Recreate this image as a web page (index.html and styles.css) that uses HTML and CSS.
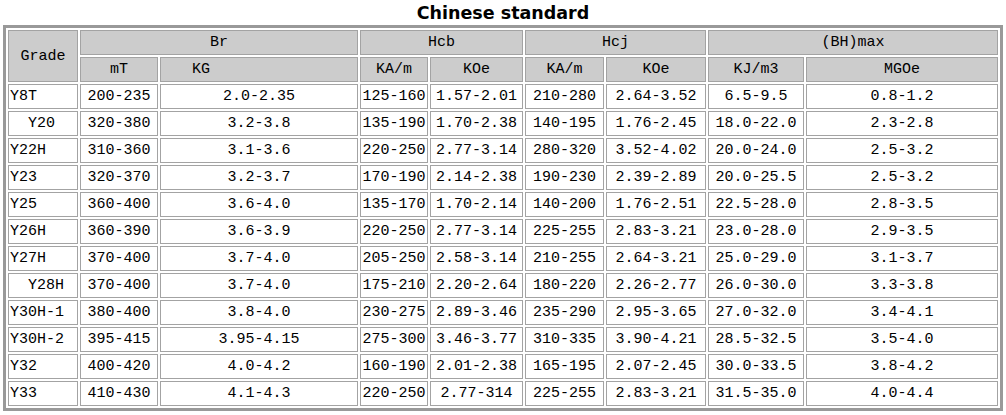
FILE: index.html
```html
<!DOCTYPE html>
<html>
<head>
<meta charset="utf-8">
<title>Chinese standard</title>
<link rel="stylesheet" href="styles.css">
</head>
<body>
<div class="page">
  <div class="title">Chinese standard</div>
  <table class="grid">
    <colgroup>
      <col class="c-grade"><col class="c-mt"><col class="c-kg"><col class="c-hcb1"><col class="c-hcb2"><col class="c-hcj1"><col class="c-hcj2"><col class="c-bh1"><col class="c-bh2">
    </colgroup>
    <thead>
      <tr>
        <th rowspan="2">Grade</th>
        <th colspan="2">Br</th>
        <th colspan="2">Hcb</th>
        <th colspan="2">Hcj</th>
        <th colspan="2">(BH)max</th>
      </tr>
      <tr>
        <th>mT</th>
        <th class="indent">KG</th>
        <th>KA/m</th>
        <th>KOe</th>
        <th>KA/m</th>
        <th>KOe</th>
        <th>KJ/m3</th>
        <th>MGOe</th>
      </tr>
    </thead>
    <tbody>
      <tr><td class="grade">Y8T</td><td>200-235</td><td>2.0-2.35</td><td>125-160</td><td>1.57-2.01</td><td>210-280</td><td>2.64-3.52</td><td>6.5-9.5</td><td>0.8-1.2</td></tr>
      <tr><td class="grade sp">Y20</td><td>320-380</td><td>3.2-3.8</td><td>135-190</td><td>1.70-2.38</td><td>140-195</td><td>1.76-2.45</td><td>18.0-22.0</td><td>2.3-2.8</td></tr>
      <tr><td class="grade">Y22H</td><td>310-360</td><td>3.1-3.6</td><td>220-250</td><td>2.77-3.14</td><td>280-320</td><td>3.52-4.02</td><td>20.0-24.0</td><td>2.5-3.2</td></tr>
      <tr><td class="grade">Y23</td><td>320-370</td><td>3.2-3.7</td><td>170-190</td><td>2.14-2.38</td><td>190-230</td><td>2.39-2.89</td><td>20.0-25.5</td><td>2.5-3.2</td></tr>
      <tr><td class="grade">Y25</td><td>360-400</td><td>3.6-4.0</td><td>135-170</td><td>1.70-2.14</td><td>140-200</td><td>1.76-2.51</td><td>22.5-28.0</td><td>2.8-3.5</td></tr>
      <tr><td class="grade">Y26H</td><td>360-390</td><td>3.6-3.9</td><td>220-250</td><td>2.77-3.14</td><td>225-255</td><td>2.83-3.21</td><td>23.0-28.0</td><td>2.9-3.5</td></tr>
      <tr><td class="grade">Y27H</td><td>370-400</td><td>3.7-4.0</td><td>205-250</td><td>2.58-3.14</td><td>210-255</td><td>2.64-3.21</td><td>25.0-29.0</td><td>3.1-3.7</td></tr>
      <tr><td class="grade sp">Y28H</td><td>370-400</td><td>3.7-4.0</td><td>175-210</td><td>2.20-2.64</td><td>180-220</td><td>2.26-2.77</td><td>26.0-30.0</td><td>3.3-3.8</td></tr>
      <tr><td class="grade">Y30H-1</td><td>380-400</td><td>3.8-4.0</td><td>230-275</td><td>2.89-3.46</td><td>235-290</td><td>2.95-3.65</td><td>27.0-32.0</td><td>3.4-4.1</td></tr>
      <tr><td class="grade">Y30H-2</td><td>395-415</td><td>3.95-4.15</td><td>275-300</td><td>3.46-3.77</td><td>310-335</td><td>3.90-4.21</td><td>28.5-32.5</td><td>3.5-4.0</td></tr>
      <tr><td class="grade">Y32</td><td>400-420</td><td>4.0-4.2</td><td>160-190</td><td>2.01-2.38</td><td>165-195</td><td>2.07-2.45</td><td>30.0-33.5</td><td>3.8-4.2</td></tr>
      <tr><td class="grade">Y33</td><td>410-430</td><td>4.1-4.3</td><td>220-250</td><td>2.77-314</td><td>225-255</td><td>2.83-3.21</td><td>31.5-35.0</td><td>4.0-4.4</td></tr>
    </tbody>
  </table>
</div>
</body>
</html>
```
FILE: styles.css
```css
html, body {
  margin: 0;
  padding: 0;
  background: #fff;
}

.page {
  padding: 0 3px;
  width: 1000px;
}

.title {
  height: 25px;
  padding-top: 1px;
  box-sizing: border-box;
  line-height: 24px;
  text-align: center;
  font-family: "DejaVu Sans", Verdana, sans-serif;
  font-weight: bold;
  font-size: 17.5px;
  color: #000;
}

.grid {
  width: 1000px;
  table-layout: fixed;
  border-collapse: separate;
  border-spacing: 2px;
  border: 3px solid #999;
  font-family: "Liberation Mono", "Noto Sans CJK SC", monospace;
  font-size: 15px;
  color: #000;
}

.c-grade { width: 70px; }
.c-mt { width: 78px; }
.c-kg { width: 198px; }
.c-hcb1 { width: 68px; }
.c-hcb2 { width: 93px; }
.c-hcj1 { width: 79px; }
.c-hcj2 { width: 100px; }
.c-bh1 { width: 96px; }
.c-bh2 { width: 192px; }

.grid tr {
  height: 25px;
}

.grid th,
.grid td {
  border: 1px solid #a3a3a3;
  padding: 0;
  text-align: center;
  vertical-align: middle;
  white-space: nowrap;
  overflow: hidden;
}

.grid th {
  background: #ccc;
  font-weight: normal;
}

.grid td {
  background: #fff;
}

.grid th.indent {
  text-align: left;
  padding-left: 31px;
}

.grid td.grade {
  text-align: left;
  padding-left: 1px;
}

.grid td.grade.sp {
  padding-left: 19px;
}
```
